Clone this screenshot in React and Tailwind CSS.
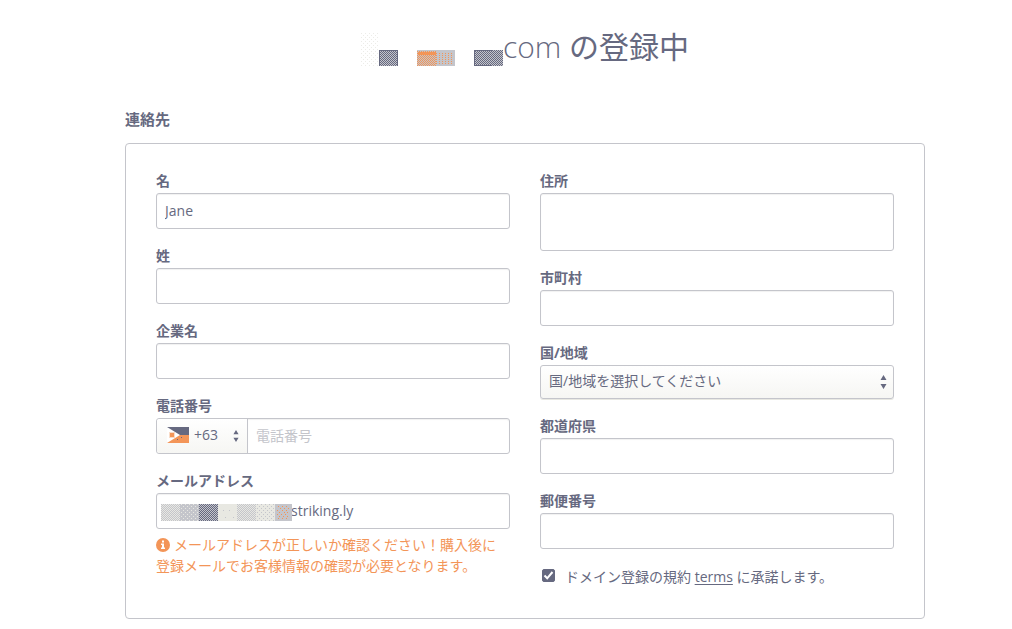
import React from "react";

const inputClass =
  "block h-9 w-full rounded-[3px] border border-[#c4c5cb] bg-white px-2 pb-0.5 text-sm text-[#666980] shadow-[inset_0_1px_1px_rgba(0,0,0,0.06)] outline-none placeholder:text-[#c4c5cb]";

function Field({ id, label, children }) {
  return (
    <div className="flex flex-col gap-0.5">
      <label htmlFor={id} className="self-start text-sm leading-5 font-bold">
        {label}
      </label>
      {children || <input id={id} type="text" className={inputClass} />}
    </div>
  );
}

function Sorter({ className }) {
  return (
    <svg viewBox="0 0 6 14" className={className} aria-hidden="true" fill="#666980">
      <path d="M3 0 6 5H0zM0 9h6L3 14z" />
    </svg>
  );
}

function TitleMosaic() {
  return (
    <svg width="142" height="34" viewBox="0 0 142 34" aria-hidden="true" shapeRendering="crispEdges">
      <defs>
        <pattern id="dots" width="4" height="4" patternUnits="userSpaceOnUse">
          <path d="M0 0h1v1H0zM2 2h1v1H2z" fill="#ecece8" />
        </pattern>
        <pattern id="darkCheck" width="2" height="2" patternUnits="userSpaceOnUse">
          <rect width="2" height="2" fill="#c4c5cb" />
          <path d="M0 0h1v1H0zM1 1h1v1H1z" fill="#666980" />
        </pattern>
        <pattern id="orangeCheck" width="2" height="2" patternUnits="userSpaceOnUse">
          <rect width="2" height="2" fill="#c4c5cb" />
          <path d="M0 0h1v1H0zM1 1h1v1H1z" fill="#f39558" />
        </pattern>
        <pattern id="orangeDots" width="3" height="2" patternUnits="userSpaceOnUse">
          <rect width="3" height="2" fill="#c4c5cb" />
          <path d="M0 0h1v1H0z" fill="#f39558" />
        </pattern>
      </defs>
      <rect width="17" height="33" fill="url(#dots)" />
      <rect x="18" y="17" width="19" height="16" fill="url(#darkCheck)" />
      <path d="M18.5 33V17.500H36.500V33" fill="none" stroke="#666980" />
      <rect x="56" y="17" width="38" height="16" fill="#c4c5cb" />
      <rect x="56" y="18" width="19" height="15" fill="url(#orangeCheck)" />
      <rect x="57" y="19" width="18" height="3" fill="#f39558" />
      <rect x="75" y="19" width="18" height="13" fill="url(#orangeDots)" />
      <rect x="113" y="17" width="29" height="16" fill="url(#darkCheck)" />
      <path d="M131 17.500H113.500V32.500H131" fill="none" stroke="#666980" />
    </svg>
  );
}

function EmailMosaic() {
  return (
    <svg
      width="131"
      height="17"
      viewBox="0 0 131 17"
      className="pointer-events-none absolute top-[11px] left-[5px]"
      aria-hidden="true"
      shapeRendering="crispEdges"
    >
      <defs>
        <pattern id="lightCheck" width="2" height="2" patternUnits="userSpaceOnUse">
          <rect width="2" height="2" fill="#e8e8e2" />
          <path d="M0 0h1v1H0zM1 1h1v1H1z" fill="#c4c5cb" />
        </pattern>
        <pattern id="sparseGray" width="4" height="4" patternUnits="userSpaceOnUse">
          <rect width="4" height="4" fill="#e8e8e2" />
          <path d="M0 0h1v1H0zM2 2h1v1H2z" fill="#c4c5cb" />
        </pattern>
        <pattern id="grayLight" width="4" height="4" patternUnits="userSpaceOnUse">
          <rect width="4" height="4" fill="#c4c5cb" />
          <path d="M0 0h1v1H0zM2 2h1v1H2z" fill="#e8e8e2" />
        </pattern>
        <pattern id="inkCheck" width="2" height="2" patternUnits="userSpaceOnUse">
          <rect width="2" height="2" fill="#c4c5cb" />
          <path d="M0 0h1v1H0zM1 1h1v1H1z" fill="#666980" />
        </pattern>
      </defs>
      <rect width="19" height="17" fill="url(#lightCheck)" />
      <rect x="19" width="19" height="17" fill="url(#grayLight)" />
      <rect x="38" width="19" height="17" fill="url(#inkCheck)" />
      <rect x="57" width="19" height="17" fill="#e8e8e2" />
      <path d="M62 6h1v1h-1zM68 6h1v1h-1zM64 13h1v1h-1zM72 13h1v1h-1z" fill="#c4c5cb" />
      <rect x="76" width="19" height="17" fill="url(#lightCheck)" />
      <rect x="95" width="19" height="17" fill="url(#sparseGray)" />
      <rect x="114" width="17" height="17" fill="#c4c5cb" />
      <path
        d="M117 2h1v1h-1zM121 2h1v1h-1zM125 2h1v1h-1zM119 4h1v1h-1zM123 4h1v1h-1zM127 4h1v1h-1zM116 6h1v1h-1zM121 6h1v1h-1zM125 6h1v1h-1zM118 8h1v1h-1zM123 8h1v1h-1zM126 8h1v1h-1zM116 10h1v1h-1zM120 10h1v1h-1zM124 10h1v1h-1zM118 12h1v1h-1zM122 12h1v1h-1zM126 12h1v1h-1zM117 14h1v1h-1zM121 14h1v1h-1zM125 14h1v1h-1z"
        fill="#f39558"
      />
    </svg>
  );
}

function Flag() {
  return (
    <svg
      width="22"
      height="16"
      viewBox="0 0 22 16"
      className="pointer-events-none absolute top-2 left-2.5"
      aria-hidden="true"
    >
      <path d="M0 0h22v8H0z" fill="#666980" />
      <path d="M0 8h22v8H0z" fill="#f39558" />
      <path d="M0 0 13 8 0 16z" fill="#fff" />
      <path d="M2 5h6v6H2z" fill="#f9dcc8" />
      <path d="M3 6h4v4H3z" fill="#f39558" />
      <path d="M10 12h1v1h-1zM14 10h1v1h-1z" fill="#666980" />
    </svg>
  );
}

export default function App() {
  return (
    <main className="min-h-screen bg-white pb-2.5 pl-[38px] text-sm text-[#666980] [font-family:'Open_Sans','Noto_Sans_CJK_JP',sans-serif]">
      <div className="mx-auto max-w-[800px]">
        <h1 className="flex items-start justify-center pt-[25px] text-[30px] leading-[44px] font-light">
          <span className="pt-2">
            <TitleMosaic />
          </span>
          <span>
            com <span className="font-normal">の登録中</span>
          </span>
        </h1>
        <h2 className="mt-[39px] text-[15px] leading-[22px] font-bold">連絡先</h2>
        <form className="mt-[13px] grid grid-cols-2 items-start gap-[30px] rounded border border-[#c4c5cb] px-[30px] pt-[27px] pb-[31px]">
          <div className="flex flex-col gap-[17px]">
            <Field id="first" label="名">
              <input id="first" type="text" defaultValue="Jane" className={inputClass} />
            </Field>
            <Field id="last" label="姓" />
            <Field id="company" label="企業名" />
            <Field id="phone" label="電話番号">
              <div className="flex h-9 rounded-[3px] border border-[#c4c5cb]">
                <div className="relative w-[91px] shrink-0 border-r border-[#c4c5cb]">
                  <select
                    aria-label="国番号"
                    className="h-full w-full appearance-none rounded-l-[3px] bg-linear-to-b from-white to-[#f6f6f3] pb-0.5 pl-[37px] text-sm outline-none"
                  >
                    <option>+63</option>
                  </select>
                  <Flag />
                  <Sorter className="pointer-events-none absolute top-[11px] right-2 h-3 w-[6px]" />
                </div>
                <input
                  id="phone"
                  type="tel"
                  placeholder="電話番号"
                  className="min-w-0 flex-1 rounded-r-[3px] px-2 text-sm shadow-[inset_0_1px_1px_rgba(0,0,0,0.06)] outline-none placeholder:text-[#c4c5cb]"
                />
              </div>
            </Field>
            <Field id="email" label="メールアドレス">
              <div className="relative">
                <input
                  id="email"
                  type="text"
                  defaultValue="striking.ly"
                  className="block h-9 w-full rounded-[3px] border border-[#c4c5cb] bg-white pr-2 pb-0.5 pl-[134px] text-sm shadow-[inset_0_1px_1px_rgba(0,0,0,0.06)] outline-none"
                />
                <EmailMosaic />
              </div>
              <p className="mt-[3px] pr-2 leading-[21px] text-[#f39558]">
                <svg width="14" height="14" viewBox="0 0 14 14" className="mr-1 inline-block align-[-2px]" aria-hidden="true">
                  <circle cx="7" cy="7" r="7" fill="#f39558" />
                  <path d="M6 2.500h2v2H6zM5 5.500h3v4h1v1.500H5V9.500h1V7H5z" fill="#fff" />
                </svg>
                メールアドレスが正しいか確認ください！購入後に登録メールでお客様情報の確認が必要となります。
              </p>
            </Field>
          </div>
          <div className="flex flex-col gap-[17px]">
            <Field id="address" label="住所">
              <textarea
                id="address"
                className="block h-[58px] w-full resize-none rounded-[3px] border border-[#c4c5cb] px-2 py-1 shadow-[inset_0_1px_1px_rgba(0,0,0,0.06)] outline-none"
              />
            </Field>
            <Field id="city" label="市町村" />
            <Field id="country" label="国/地域">
              <div className="relative">
                <select
                  id="country"
                  className="block h-[34px] w-full appearance-none rounded-[3px] border border-[#c4c5cb] bg-linear-to-b from-white to-[#f6f6f3] px-2 pb-0.5 text-sm shadow-[0_1px_0_#e8e8e2] outline-none"
                >
                  <option>国/地域を選択してください</option>
                </select>
                <Sorter className="pointer-events-none absolute top-2.5 right-[7px] h-3.5 w-[7px]" />
              </div>
            </Field>
            <Field id="state" label="都道府県" />
            <Field id="zip" label="郵便番号" />
            <div className="flex items-center gap-2.5 pl-0.5 leading-[21px]">
              <span className="relative -mt-0.5 flex size-[13px] shrink-0">
                <input
                  id="agree"
                  type="checkbox"
                  defaultChecked
                  className="peer size-[13px] appearance-none rounded-[2px] border border-[#666980] checked:bg-[#666980]"
                />
                <svg
                  viewBox="0 0 13 13"
                  className="pointer-events-none absolute inset-0 hidden size-[13px] peer-checked:block"
                  fill="none"
                  stroke="#fff"
                  strokeWidth="2"
                  aria-hidden="true"
                >
                  <path d="M2.500 6.500 5.200 9.300 10.500 3" />
                </svg>
              </span>
              <label htmlFor="agree">
                ドメイン登録の規約{" "}
                <a href="#terms" className="underline underline-offset-2">
                  terms
                </a>{" "}
                に承諾します。
              </label>
            </div>
          </div>
        </form>
      </div>
    </main>
  );
}
